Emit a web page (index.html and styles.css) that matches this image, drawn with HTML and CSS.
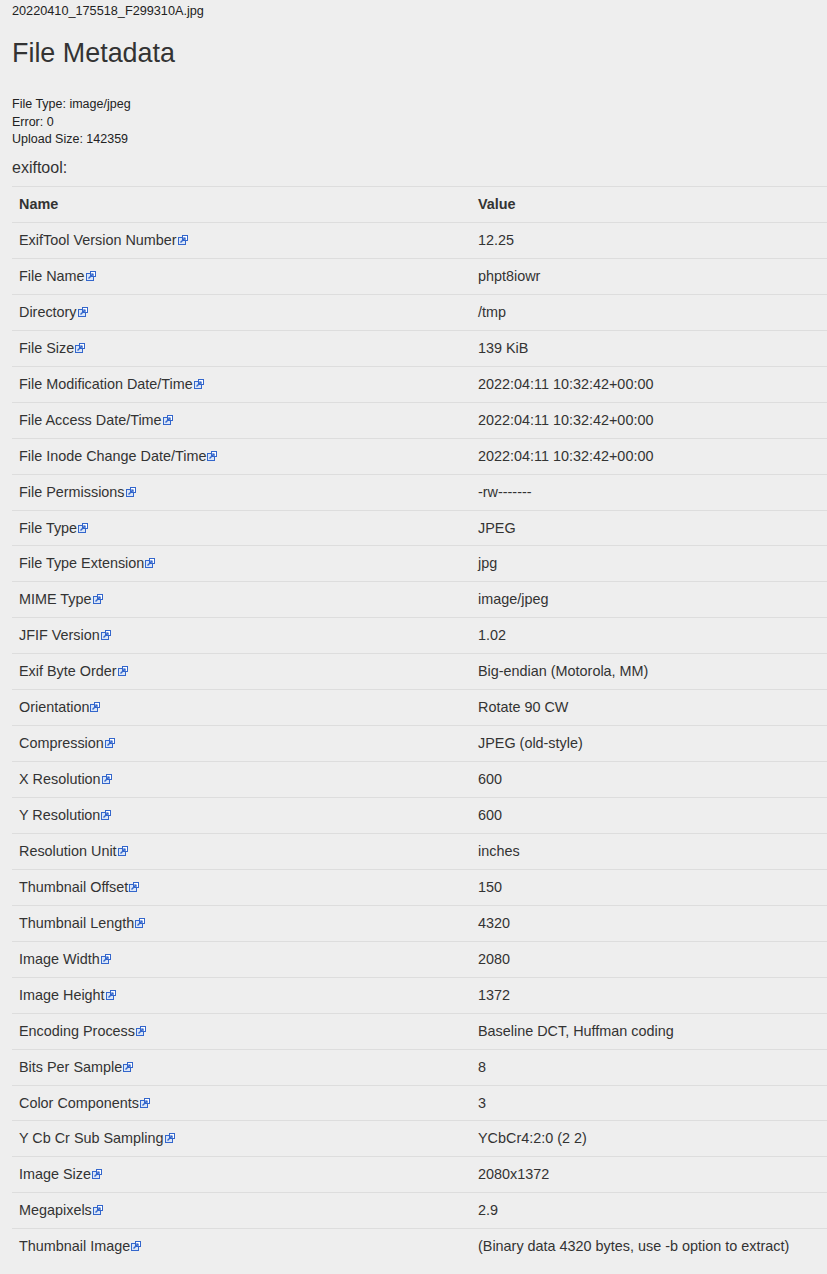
FILE: index.html
```html
<!DOCTYPE html>
<html>
<head>
<meta charset="utf-8">
<title>File Metadata</title>
<link rel="stylesheet" href="styles.css">
</head>
<body>
<div class="page">
  <div class="filename">20220410_175518_F299310A.jpg</div>
  <h1 class="title">File Metadata</h1>
  <div class="info">
    <div>File Type: image/jpeg</div>
    <div>Error: 0</div>
    <div>Upload Size: 142359</div>
  </div>
  <div class="tool">exiftool:</div>
  <table class="meta">
    <colgroup><col class="c-name"><col></colgroup>
    <thead>
      <tr><th>Name</th><th>Value</th></tr>
    </thead>
    <tbody id="rows"></tbody>
  </table>
</div>
<script src="script.js"></script>
</body>
</html>
```

FILE: script.js
```js
var data = [
  ["ExifTool Version Number", "12.25"],
  ["File Name", "phpt8iowr"],
  ["Directory", "/tmp"],
  ["File Size", "139 KiB"],
  ["File Modification Date/Time", "2022:04:11 10:32:42+00:00"],
  ["File Access Date/Time", "2022:04:11 10:32:42+00:00"],
  ["File Inode Change Date/Time", "2022:04:11 10:32:42+00:00"],
  ["File Permissions", "-rw-------"],
  ["File Type", "JPEG"],
  ["File Type Extension", "jpg"],
  ["MIME Type", "image/jpeg"],
  ["JFIF Version", "1.02"],
  ["Exif Byte Order", "Big-endian (Motorola, MM)"],
  ["Orientation", "Rotate 90 CW"],
  ["Compression", "JPEG (old-style)"],
  ["X Resolution", "600"],
  ["Y Resolution", "600"],
  ["Resolution Unit", "inches"],
  ["Thumbnail Offset", "150"],
  ["Thumbnail Length", "4320"],
  ["Image Width", "2080"],
  ["Image Height", "1372"],
  ["Encoding Process", "Baseline DCT, Huffman coding"],
  ["Bits Per Sample", "8"],
  ["Color Components", "3"],
  ["Y Cb Cr Sub Sampling", "YCbCr4:2:0 (2 2)"],
  ["Image Size", "2080x1372"],
  ["Megapixels", "2.9"],
  ["Thumbnail Image", "(Binary data 4320 bytes, use -b option to extract)"]
];
var icon = '<svg class="ext" width="10" height="10" viewBox="0 0 10 10" aria-hidden="true">' +
  '<rect x="0.5" y="2.5" width="7" height="7" fill="#dbe6f7" stroke="#3366cc" stroke-width="1"/>' +
  '<rect x="4.5" y="0.5" width="5" height="5" fill="#ffffff" stroke="#3366cc" stroke-width="1"/>' +
  '<path d="M2.5 7.5 L7 3" stroke="#3366cc" stroke-width="1.4" fill="none"/>' +
  '<path d="M4.5 3 L7 3 L7 5.5" stroke="#3366cc" stroke-width="1.2" fill="none"/>' +
  '</svg>';
var tb = document.getElementById('rows');
var html = '';
for (var i = 0; i < data.length; i++) {
  html += '<tr><td>' + data[i][0] + icon + '</td><td>' + data[i][1] + '</td></tr>';
}
tb.innerHTML = html;
```

FILE: styles.css
```css
html, body {
  margin: 0;
  padding: 0;
  background: #eeeeee;
}
body {
  font-family: "Liberation Sans", Arial, Helvetica, sans-serif;
  color: #333333;
}
.page {
  padding: 2px 0 0 12px;
}
.filename {
  font-size: 12.7px;
  line-height: 18px;
  color: #222222;
}
.title {
  margin: 17px 0 0 0;
  font-size: 26.9px;
  line-height: 32px;
  font-weight: normal;
  color: #333333;
}
.info {
  margin-top: 27px;
  font-size: 12.5px;
  line-height: 17.7px;
  color: #222222;
}
.tool {
  margin-top: 9px;
  font-size: 16px;
  line-height: 20px;
  color: #333333;
}
.meta {
  margin-top: 8px;
  width: 815px;
  border-collapse: collapse;
  table-layout: fixed;
  font-size: 14.4px;
  line-height: 18.93px;
}
.c-name {
  width: 459px;
}
.meta th,
.meta td {
  text-align: left;
  padding: 8px 7px;
  border-top: 1px solid #dddddd;
  vertical-align: top;
  white-space: nowrap;
}
.meta th {
  font-weight: bold;
}
.ext {
  display: inline-block;
  vertical-align: baseline;
  margin-left: 1px;
}
```
